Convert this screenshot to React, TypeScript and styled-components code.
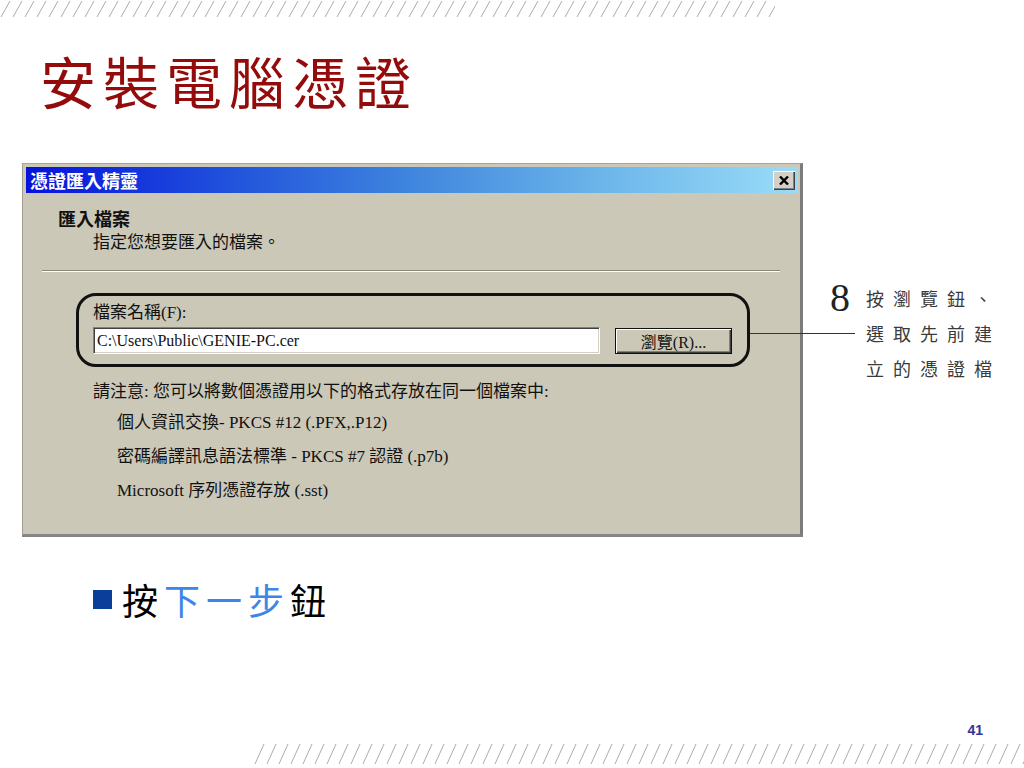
import styled, { createGlobalStyle } from "styled-components";

const CJK = `"Noto Sans CJK TC", "Noto Sans CJK SC", sans-serif`;
const MIXED = `"Liberation Serif", "Noto Sans CJK TC", serif`;

const GlobalStyle = createGlobalStyle`
  html, body {
    margin: 0;
    padding: 0;
    background: #fff;
  }

  * {
    box-sizing: border-box;
  }
`;

interface HatchProps {
  id: string;
  width: number;
  height: number;
}

// the grey "////" strip at the top and bottom of the slide
const Hatch = ({ id, width, height }: HatchProps) => (
  <svg width={width} height={height} style={{ display: "block" }}>
    <defs>
      <pattern id={id} width="12" height={height} patternUnits="userSpaceOnUse">
        <line x1="1" y1={height - 1} x2="10" y2="1" stroke="#ababab" strokeWidth="1" />
      </pattern>
    </defs>
    <rect width={width} height={height} fill={`url(#${id})`} />
  </svg>
);

const notes = [
  "個人資訊交換- PKCS #12 (.PFX,.P12)",
  "密碼編譯訊息語法標準 - PKCS #7 認證 (.p7b)",
  "Microsoft 序列憑證存放 (.sst)",
];

const calloutLines = ["按瀏覽鈕、", "選取先前建", "立的憑證檔"];

const App = () => {
  return (
    <Page>
      <GlobalStyle />
      <Hatch id="hatch-top" width={775} height={18} />

      <Title>安裝電腦憑證</Title>

      <Stage>
        <Dialog>
          <TitleBar>
            <span>憑證匯入精靈</span>
            <CloseButton>
              <svg width="10" height="9" viewBox="0 0 10 9">
                <path d="M1 0.5 L9 8.5 M9 0.5 L1 8.5" stroke="#000" strokeWidth="2.4" />
              </svg>
            </CloseButton>
          </TitleBar>

          <Heading>匯入檔案</Heading>
          <SubHeading>指定您想要匯入的檔案。</SubHeading>
          <Separator />

          <FileBox>
            <FieldLabel>檔案名稱(F):</FieldLabel>
            <FieldRow>
              <PathInput>C:\Users\Public\GENIE-PC.cer</PathInput>
              <BrowseButton>瀏覽(R)...</BrowseButton>
            </FieldRow>
          </FileBox>

          <NoteTitle>請注意: 您可以將數個憑證用以下的格式存放在同一個檔案中:</NoteTitle>
          <NoteList>
            {notes.map((n) => (
              <NoteItem key={n}>{n}</NoteItem>
            ))}
          </NoteList>
        </Dialog>

        <Callout>
          <Step>8</Step>
          {calloutLines.map((line) => (
            <CalloutLine key={line}>{line}</CalloutLine>
          ))}
        </Callout>
      </Stage>

      <Bullet>
        <BulletMark />
        <BulletText>
          按<Accent>下一步</Accent>鈕
        </BulletText>
      </Bullet>

      <Footer>
        <PageNo>41</PageNo>
        <Hatch id="hatch-bottom" width={770} height={22} />
      </Footer>
    </Page>
  );
};

export default App;

const Page = styled.div`
  width: 1024px;
  height: 768px;
  display: flex;
  flex-direction: column;
  overflow: hidden;
  background: #fff;
`;

const Title = styled.h1`
  margin: 30px 0 0 40px;
  height: 64px;
  font-family: ${CJK};
  font-size: 56px;
  font-weight: 400;
  line-height: 64px;
  letter-spacing: 7px;
  color: #930b0b;
`;

const Stage = styled.div`
  display: flex;
  align-items: flex-start;
  margin-top: 51px;
`;

const Dialog = styled.div`
  width: 781px;
  height: 374px;
  margin-left: 22px;
  display: flex;
  flex-direction: column;
  padding: 3px 2px 2px 3px;
  background: #cbc8b8;
  border-top: 1px solid #a8a596;
  border-left: 1px solid #a09d90;
  border-right: 3px solid #7b7b7b;
  border-bottom: 3px solid #858585;
  font-family: ${MIXED};
  color: #111;
`;

const TitleBar = styled.div`
  height: 26px;
  display: flex;
  align-items: center;
  justify-content: space-between;
  padding: 0 3px 0 4px;
  background: linear-gradient(
    to right,
    #0612dc 0%,
    #1f4fdc 25%,
    #3f86de 50%,
    #6cb6ea 75%,
    #9adcf8 100%
  );
  color: #fff;
  font-family: ${CJK};
  font-size: 18px;
  font-weight: 700;
`;

const CloseButton = styled.div`
  width: 22px;
  height: 19px;
  display: flex;
  align-items: center;
  justify-content: center;
  background: #d4d0c8;
  box-shadow: inset 1px 1px 0 #fff, inset -1px -1px 0 #404040,
    inset -2px -2px 0 #808080;
`;

const Heading = styled.div`
  margin-top: 12px;
  padding-left: 32px;
  font-family: ${CJK};
  font-size: 18px;
  font-weight: 700;
  line-height: 26px;
`;

const SubHeading = styled.div`
  padding-left: 67px;
  font-size: 17px;
  line-height: 24px;
`;

const Separator = styled.div`
  width: 738px;
  height: 2px;
  margin: 15px 0 0 16px;
  border-top: 1px solid #8a877a;
  border-bottom: 1px solid #fff;
`;

const FileBox = styled.div`
  position: relative;
  width: 674px;
  margin: 21px 0 0 50px;
  padding: 6px 15px 10px 14px;
  border: 3px solid #111;
  border-radius: 20px;

  &::after {
    content: "";
    position: absolute;
    left: calc(100% + 3px);
    top: 37px;
    width: 105px;
    height: 1px;
    background: #333;
  }
`;

const FieldLabel = styled.div`
  font-size: 17px;
  line-height: 22px;
`;

const FieldRow = styled.div`
  display: flex;
  align-items: flex-end;
  gap: 15px;
  margin-top: 3px;
`;

const PathInput = styled.div`
  width: 507px;
  height: 27px;
  padding-left: 3px;
  background: #fff;
  border-top: 1px solid #808080;
  border-left: 1px solid #808080;
  border-bottom: 1px solid #fff;
  border-right: 1px solid #fff;
  box-shadow: inset 1px 1px 0 #404040, inset -1px -1px 0 #d4d0c8;
  font-family: "Liberation Serif", serif;
  font-size: 16px;
  line-height: 25px;
  color: #111;
`;

const BrowseButton = styled.div`
  width: 117px;
  height: 26px;
  display: flex;
  align-items: center;
  justify-content: center;
  background: #cbc8b8;
  border: 1px solid #111;
  box-shadow: inset 1px 1px 0 #fff, inset -1px -1px 0 #404040,
    inset -2px -2px 0 #808080;
  font-size: 16px;
`;

const NoteTitle = styled.div`
  margin-top: 13px;
  padding-left: 67px;
  font-size: 17px;
  line-height: 24px;
`;

const NoteList = styled.div`
  display: flex;
  flex-direction: column;
  margin-top: 2px;
`;

const NoteItem = styled.div`
  padding-left: 91px;
  font-size: 17px;
  line-height: 34px;
`;

const Callout = styled.div`
  display: grid;
  grid-template-columns: 36px auto;
  grid-auto-rows: 35px;
  align-items: center;
  margin: 117px 0 0 27px;
  font-family: ${CJK};
  font-size: 18px;
  letter-spacing: 9px;
  color: #3a3a3a;
`;

const Step = styled.div`
  grid-column: 1;
  grid-row: 1;
  font-family: "Liberation Serif", serif;
  font-size: 40px;
  line-height: 35px;
  letter-spacing: 0;
  color: #222;
`;

const CalloutLine = styled.div`
  grid-column: 2;
  white-space: nowrap;
`;

const Bullet = styled.div`
  display: flex;
  align-items: center;
  gap: 10px;
  height: 44px;
  margin: 40px 0 0 93px;
`;

const BulletMark = styled.div`
  width: 19px;
  height: 19px;
  background: #0b3d9a;
`;

const BulletText = styled.div`
  font-family: ${CJK};
  font-size: 36px;
  letter-spacing: 6px;
  line-height: 44px;
  color: #000;
`;

const Accent = styled.span`
  color: #3d86e8;
`;

const Footer = styled.div`
  margin-top: auto;
  display: flex;
  flex-direction: column;
  align-items: flex-end;
  padding-bottom: 3px;
`;

const PageNo = styled.div`
  margin: 0 41px 5px 0;
  font-family: "Liberation Sans", Arial, sans-serif;
  font-size: 14px;
  font-weight: 700;
  line-height: 16px;
  color: #333399;
`;
